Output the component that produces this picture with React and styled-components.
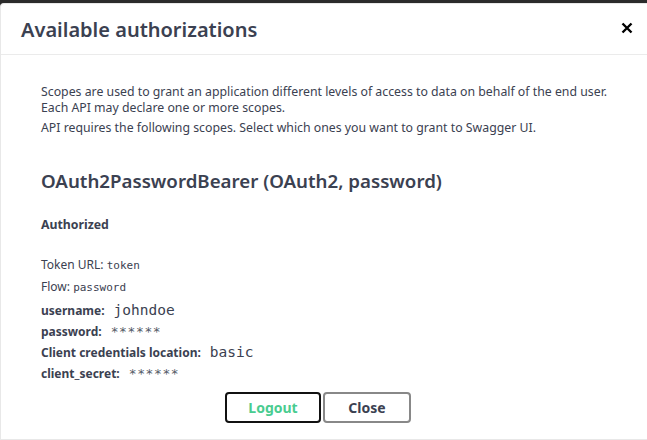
import React from "react";
import styled, { createGlobalStyle } from "styled-components";

const Global = createGlobalStyle`
  html, body { margin: 0; padding: 0; }
  body {
    background: #fff;
    font-family: "Noto Sans", "Open Sans", sans-serif;
    color: #3b4151;
    overflow: hidden;
  }
`;

const Backdrop = styled.div`
  width: 647px;
  height: 440px;
  background: #2b2b2b;
  padding-top: 3px;
  box-sizing: border-box;
  overflow: hidden;
`;

const Modal = styled.div`
  background: #fff;
  border: 1px solid #e8e8e8;
  border-right: none;
  border-radius: 4px 0 0 0;
  height: 100%;
  box-sizing: border-box;
`;

const Header = styled.div`
  display: flex;
  align-items: center;
  justify-content: space-between;
  height: 50px;
  padding: 0 12px 0 20px;
  border-bottom: 1px solid #ebebeb;
`;

const Title = styled.h3`
  margin: 0;
  font-size: 20px;
  font-weight: 600;
  color: #3b4151;
`;

const CloseX = styled.button`
  border: none;
  background: none;
  padding: 0;
  width: 14px;
  height: 14px;
  display: flex;
`;

const Content = styled.div`
  padding: 29px 40px 0 40px;
`;

const P = styled.p`
  margin: 0 0 ${(p) => p.$mb || 0}px;
  font-size: 12.3px;
  line-height: 16px;
  color: #3b4151;
  white-space: nowrap;
`;

const Heading = styled.h4`
  margin: 32px 0 0;
  font-size: 18.7px;
  font-weight: 600;
  color: #3b4151;
  line-height: 26px;
`;

const Authorized = styled.h6`
  margin: 22px 0 0;
  font-size: 12.3px;
  font-weight: 700;
  color: #3b4151;
`;

const Meta = styled.p`
  margin: ${(p) => p.$mt}px 0 0;
  font-size: 12px;
  line-height: 16px;
  color: #3b4151;
`;

const Code = styled.code`
  font-family: "DejaVu Sans Mono", "Liberation Mono", monospace;
  font-size: 11px;
  color: #3b4151;
`;

const Field = styled.div`
  display: flex;
  align-items: baseline;
  margin-top: ${(p) => p.$mt || 4}px;
  height: 17px;
`;

const Label = styled.label`
  font-size: 12px;
  font-weight: 700;
  color: #3b4151;
`;

const Value = styled.code`
  font-family: "DejaVu Sans Mono", "Liberation Mono", monospace;
  font-size: ${(p) => (p.$stars ? 13 : 14.5)}px;
  color: ${(p) => (p.$stars ? "#555b68" : "#3b4151")};
  margin-left: 9px;
  letter-spacing: ${(p) => (p.$stars ? "0.6px" : "0")};
`;

const Buttons = styled.div`
  display: flex;
  justify-content: center;
  gap: 2px;
  margin-top: 10px;
  padding-right: 12px;
`;

const Btn = styled.button`
  box-sizing: border-box;
  width: ${(p) => p.$w}px;
  height: 31px;
  border: 2px solid ${(p) => p.$border};
  border-radius: 4px;
  background: #fff;
  color: ${(p) => p.$color};
  font-family: "Noto Sans", "Open Sans", sans-serif;
  font-size: 14px;
  font-weight: 700;
  padding: 0;
`;

export default function App() {
  return (
    <>
      <Global />
      <Backdrop>
        <Modal>
          <Header>
            <Title>Available authorizations</Title>
            <CloseX aria-label="close">
              <svg width="12" height="12" viewBox="0 0 12 12">
                <path d="M1.5 1.5 L10.5 10.5 M10.5 1.5 L1.5 10.5" stroke="#000" strokeWidth="2.4" />
              </svg>
            </CloseX>
          </Header>
          <Content>
            <P $mb={4}>
              Scopes are used to grant an application different levels of access to data on behalf of the end user.
              <br />
              Each API may declare one or more scopes.
            </P>
            <P>API requires the following scopes. Select which ones you want to grant to Swagger UI.</P>
            <Heading>OAuth2PasswordBearer (OAuth2, password)</Heading>
            <Authorized>Authorized</Authorized>
            <Meta $mt={24}>
              Token URL: <Code>token</Code>
            </Meta>
            <Meta $mt={5}>
              Flow: <Code>password</Code>
            </Meta>
            <Field $mt={6}>
              <Label>username:</Label>
              <Value>johndoe</Value>
            </Field>
            <Field>
              <Label>password:</Label>
              <Value $stars>******</Value>
            </Field>
            <Field>
              <Label>Client credentials location:</Label>
              <Value>basic</Value>
            </Field>
            <Field>
              <Label>client_secret:</Label>
              <Value $stars>******</Value>
            </Field>
            <Buttons>
              <Btn $w={96} $border="#111" $color="#49cc90">Logout</Btn>
              <Btn $w={88} $border="#888" $color="#3b4151">Close</Btn>
            </Buttons>
          </Content>
        </Modal>
      </Backdrop>
    </>
  );
}
